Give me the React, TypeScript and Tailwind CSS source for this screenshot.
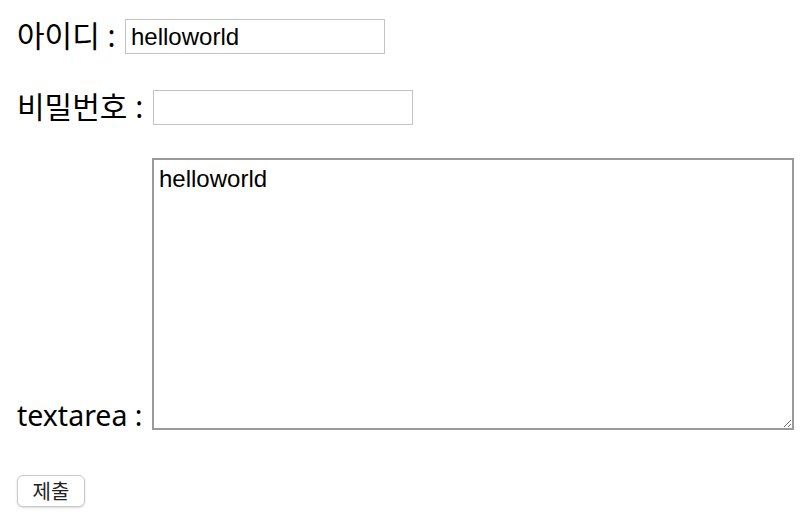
import React from "react";

const labelFont = "font-['Noto_Sans','Noto_Sans_CJK_KR',sans-serif] leading-none text-black";
const fieldFont = "font-['Liberation_Sans','Noto_Sans_CJK_KR',sans-serif] text-[24px] text-black";

export default function App() {
  return (
    <div className="min-h-screen bg-white pl-[17px] pt-[19px]">
      <form className="flex flex-col" onSubmit={(e) => e.preventDefault()}>
        {/* 아이디 */}
        <div className="flex items-center">
          <label className={`${labelFont} -mt-[2px] w-[108px] whitespace-nowrap text-[30px]`}>아이디 :</label>
          <input
            type="text"
            defaultValue="helloworld"
            className={`${fieldFont} h-[35px] w-[260px] border border-[#c3c3c3] px-[5px] outline-none`}
          />
        </div>

        {/* 비밀번호 */}
        <div className="mt-[36px] flex items-center">
          <label className={`${labelFont} -mt-[2px] w-[136px] whitespace-nowrap text-[30px]`}>비밀번호 :</label>
          <input
            type="password"
            className={`${fieldFont} h-[35px] w-[260px] border border-[#c3c3c3] px-[5px] outline-none`}
          />
        </div>

        {/* textarea */}
        <div className="mt-[33px] flex items-end">
          <label className={`${labelFont} mb-[1px] w-[135px] whitespace-nowrap text-[28.5px]`}>textarea :</label>
          <textarea
            defaultValue="helloworld"
            className={`${fieldFont} h-[272px] w-[642px] border-2 border-[#9a9a9a] px-[5px] pt-[3px] leading-[32px] outline-none`}
          />
        </div>

        <div className="mt-[45px]">
          <button
            type="submit"
            className="h-[32px] w-[68px] rounded-[6px] border border-[#c9c9c9] bg-white font-['Noto_Sans_CJK_KR',sans-serif] text-[20px] leading-none text-[#222] shadow-[0_1px_2px_rgba(0,0,0,0.15)]"
          >
            제출
          </button>
        </div>
      </form>
    </div>
  );
}
